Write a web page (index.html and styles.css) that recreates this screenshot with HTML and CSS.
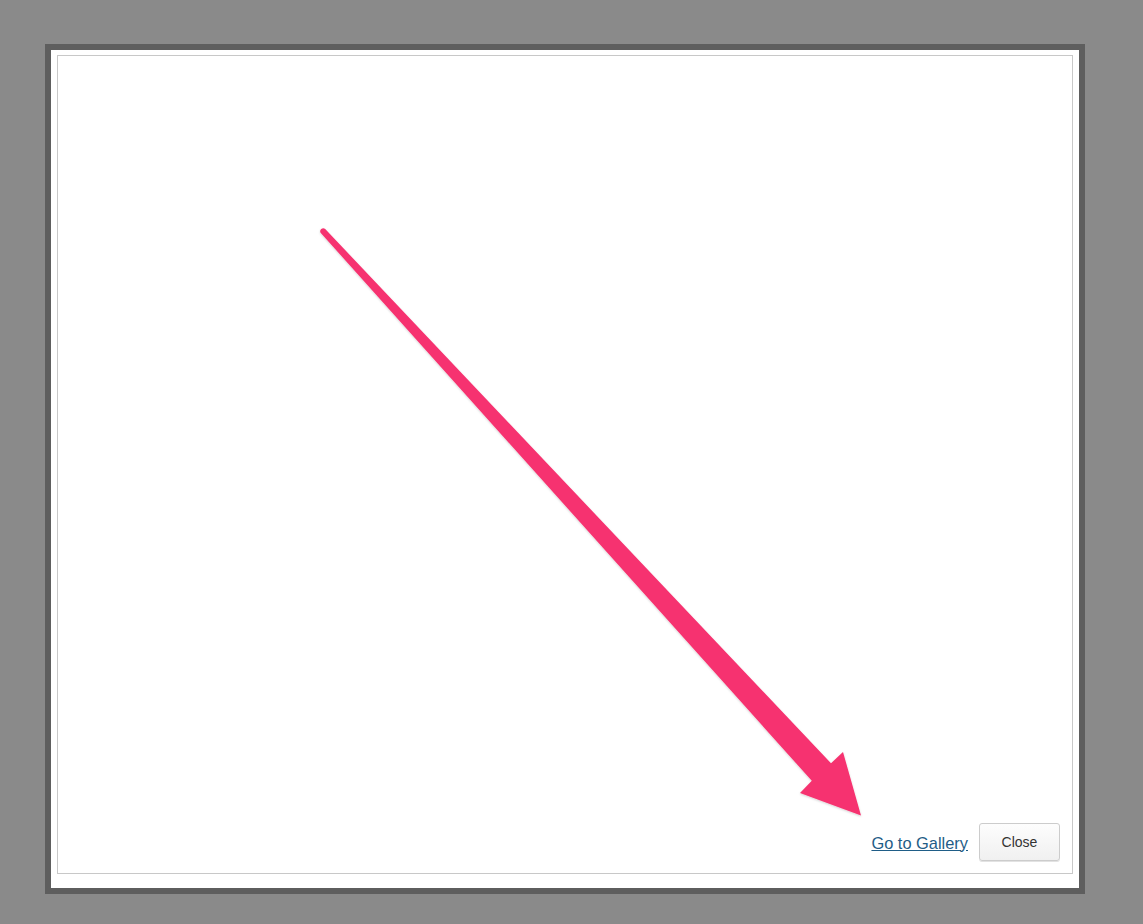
FILE: index.html
```html
<!DOCTYPE html>
<html lang="en">
<head>
<meta charset="utf-8">
<title>Gallery</title>
<link rel="stylesheet" href="styles.css">
</head>
<body>
<div class="modal">
  <div class="modal-inner">
    <div class="frame">
      <div class="footer">
        <a class="gallery-link" href="#">Go to Gallery</a>
        <button class="close-btn" type="button">Close</button>
      </div>
    </div>
  </div>
</div>
<svg class="annotation" width="1143" height="924" viewBox="0 0 1143 924" aria-hidden="true">
  <defs>
    <filter id="sh" x="-5%" y="-5%" width="110%" height="110%">
      <feDropShadow dx="0" dy="1" stdDeviation="1.2" flood-color="#000" flood-opacity="0.18"/>
    </filter>
  </defs>
  <path filter="url(#sh)" fill="#f6336f" d="M325.2 229 L831 763.2 L843 752 L861 815.5 L800 793 L811.8 780.8 L320.8 233 A3 3 0 0 1 325.2 229 Z"/>
</svg>
</body>
</html>
```
FILE: styles.css
```css
html, body {
  margin: 0;
  padding: 0;
}
body {
  background: #8a8a8a;
  width: 1143px;
  height: 924px;
  overflow: hidden;
  position: relative;
  font-family: "Liberation Sans", Arial, sans-serif;
}
.modal {
  margin: 44px 0 0 45px;
  width: 1028px;
  height: 838px;
  border: 6px solid #5e5e5e;
  background: #ffffff;
}
.modal-inner {
  box-sizing: border-box;
  height: 100%;
  padding: 5px 6px 14px 6px;
}
.frame {
  box-sizing: border-box;
  height: 100%;
  border: 1px solid #c8c8c8;
  display: flex;
  flex-direction: column;
  justify-content: flex-end;
  padding: 0 12px 12px 0;
}
.footer {
  display: flex;
  justify-content: flex-end;
  align-items: center;
  gap: 11px;
}
.gallery-link {
  font-size: 16.4px;
  color: #1f5d87;
  text-decoration: underline;
  position: relative;
  top: 1px;
}
.close-btn {
  box-sizing: border-box;
  width: 81px;
  height: 38px;
  font-family: "Liberation Sans", Arial, sans-serif;
  font-size: 14px;
  color: #333333;
  background: linear-gradient(#fdfdfd, #f0f0f0);
  border: 1px solid #cccccc;
  border-radius: 3px;
  box-shadow: 0 1px 0 #e2e2e2;
  padding: 0;
}
.annotation {
  position: absolute;
  left: 0;
  top: 0;
  pointer-events: none;
}
```
